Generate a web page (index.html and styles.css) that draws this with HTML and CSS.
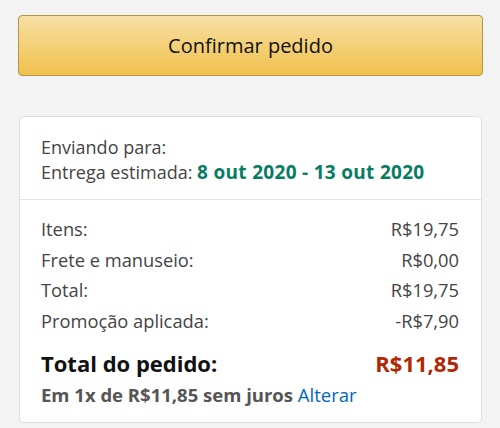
FILE: index.html
```html
<!DOCTYPE html>
<html lang="pt-BR">
<head>
  <meta charset="UTF-8" />
  <meta name="viewport" content="width=device-width, initial-scale=1.0"/>
  <title>Confirmar pedido</title>
  <link rel="stylesheet" href="styles.css">
</head>
<body>

<div class="page">
  <button class="confirm-button">Confirmar pedido</button>

  <div class="order-box">
    <div class="shipping">
      <div>Enviando para:</div>
      <div>Entrega estimada: <span class="delivery-date">8 out 2020 - 13 out 2020</span></div>
    </div>

    <div class="summary">
      <div class="summary-row"><span>Itens:</span><span>R$19,75</span></div>
      <div class="summary-row"><span>Frete e manuseio:</span><span>R$0,00</span></div>
      <div class="summary-row"><span>Total:</span><span>R$19,75</span></div>
      <div class="summary-row"><span>Promoção aplicada:</span><span>-R$7,90</span></div>

      <div class="order-total"><span>Total do pedido:</span><span class="price">R$11,85</span></div>
      <div class="installments">Em 1x de R$11,85 sem juros <a href="#">Alterar</a></div>
    </div>
  </div>
</div>

</body>
</html>
```

FILE: styles.css
```css
html, body {
  margin: 0;
  padding: 0;
  background: #f3f3f3;
  font-family: "Open Sans", "Noto Sans", sans-serif;
  color: #444;
}

.page {
  padding: 15px 17px 0 18px;
  display: flex;
  flex-direction: column;
}

.confirm-button {
  height: 61px;
  border: 1px solid #b39548;
  border-radius: 4px;
  background: linear-gradient(to bottom, #f7dfa5, #f0c14b);
  color: #111;
  font-family: inherit;
  font-size: 20px;
  cursor: pointer;
}

.order-box {
  margin: 40px 1px 0 1px;
  background: white;
  border: 1px solid #dedede;
  border-radius: 5px;
}

.shipping {
  padding: 18px 21px 15px 21px;
  border-bottom: 1px solid #e4e4e4;
  font-size: 18px;
  line-height: 24.5px;
}

.delivery-date {
  color: #067d62;
  font-weight: bold;
  font-size: 19px;
  letter-spacing: 0.3px;
}

.summary {
  padding: 14px 22px 15px 21px;
}

.summary-row {
  display: flex;
  justify-content: space-between;
  font-size: 18.3px;
  line-height: 30.5px;
}

.order-total {
  display: flex;
  justify-content: space-between;
  margin-top: 12px;
  font-size: 22px;
  line-height: 30px;
  font-weight: bold;
  color: #111;
}

.order-total .price {
  color: #b12704;
}

.installments {
  margin-top: 4px;
  font-size: 18.5px;
  line-height: 25px;
  font-weight: bold;
  color: #555;
}

.installments a {
  font-weight: normal;
  color: #0066c0;
  text-decoration: none;
}
```
